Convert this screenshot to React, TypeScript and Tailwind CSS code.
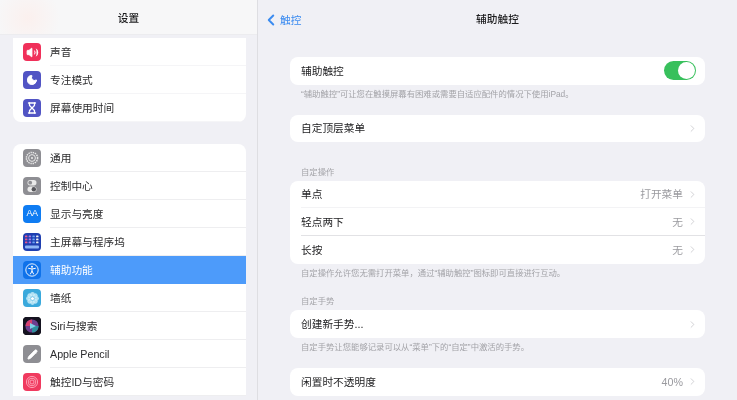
import React from "react";
import { Volume2, Moon, Hourglass, ChevronLeft, ChevronRight, Pencil } from "lucide-react";

const FONT = "font-['Liberation_Sans','Noto_Sans_CJK_SC',sans-serif]";

function IconBox({ className, children }: { className: string; children?: React.ReactNode }) {
  return (
    <div className={`w-[18px] h-[18px] rounded-[4px] flex items-center justify-center shrink-0 overflow-hidden ${className}`}>
      {children}
    </div>
  );
}

function GearIcon() {
  return (
    <svg width="14" height="14" viewBox="0 0 14 14">
      <circle cx="7" cy="7" r="5.6" fill="none" stroke="#e8e8e8" strokeWidth="1.5" strokeDasharray="1.4 0.8" />
      <circle cx="7" cy="7" r="3.4" fill="none" stroke="#e8e8e8" strokeWidth="1" />
      <circle cx="7" cy="7" r="1.1" fill="#e8e8e8" />
    </svg>
  );
}

function ControlIcon() {
  return (
    <svg width="14" height="14" viewBox="0 0 14 14">
      <rect x="2.5" y="1" width="9" height="5.4" rx="2.7" fill="#e9e9e9" />
      <circle cx="5.2" cy="3.7" r="1.9" fill="#8e8e93" />
      <rect x="2.5" y="7.6" width="9" height="5.4" rx="2.7" fill="#e9e9e9" />
      <circle cx="8.8" cy="10.3" r="2.2" fill="#55555a" />
    </svg>
  );
}

function HomeIcon() {
  const colors = ["#e8578d", "#a879e6", "#6da6f5", "#f0f0f0"];
  return (
    <svg width="16" height="16" viewBox="0 0 16 16">
      {[1.5, 4.5, 7.5].map((y) =>
        [1, 4.7, 8.4, 12.1].map((x, i) => <rect key={`${x}-${y}`} x={x} y={y} width="2.4" height="1.8" rx="0.4" fill={colors[i]} />)
      )}
      <rect x="1" y="11.5" width="14" height="3" rx="1" fill="#8fb6f5" />
    </svg>
  );
}

function AccessIcon() {
  return (
    <svg width="14" height="14" viewBox="0 0 14 14" fill="none" stroke="#fff">
      <circle cx="7" cy="7" r="6.2" strokeWidth="0.9" />
      <circle cx="7" cy="3.7" r="1" fill="#fff" stroke="none" />
      <path d="M3.6 5.3 L7 6 L10.4 5.3 M7 6 V8.2 M7 8.2 L5.4 11 M7 8.2 L8.6 11" strokeWidth="1" strokeLinecap="round" />
    </svg>
  );
}

function FlowerIcon() {
  return (
    <svg width="15" height="15" viewBox="0 0 15 15" fill="#d8f3fb" fillOpacity="0.75">
      {[0, 45, 90, 135, 180, 225, 270, 315].map((a) => (
        <circle key={a} cx="7.5" cy="3.4" r="2.3" transform={`rotate(${a} 7.5 7.5)`} />
      ))}
      <circle cx="7.5" cy="7.5" r="1.6" fill="#fff" fillOpacity="1" />
    </svg>
  );
}

function SiriIcon() {
  return (
    <svg width="18" height="18" viewBox="0 0 18 18">
      <rect width="18" height="18" fill="#151320" />
      <circle cx="9" cy="9" r="6.6" fill="#6d3f8f" />
      <path d="M2.6 9 A6.5 6.5 0 0 1 9 2.5 L9 9 Z" fill="#d6406f" />
      <path d="M9 15.6 A6.6 6.6 0 0 0 15.6 9 L9 9 Z" fill="#2f8f9e" />
      <path d="M7 6 L13 9 L7 12 Z" fill="#7fd0e8" />
    </svg>
  );
}

function FingerprintIcon() {
  return (
    <svg width="14" height="14" viewBox="0 0 14 14" fill="none" stroke="#ffa9bb" strokeWidth="0.9">
      <circle cx="7" cy="7" r="5.6" />
      <circle cx="7" cy="7" r="3.8" />
      <circle cx="7" cy="7" r="2" />
    </svg>
  );
}

type SideItem = { label: string; icon: React.ReactNode; active?: boolean };

const topItems: SideItem[] = [
  { label: "声音", icon: <IconBox className="bg-[#f0305a]"><Volume2 size={13} color="#fff" fill="#fff" strokeWidth={1.6} /></IconBox> },
  { label: "专注模式", icon: <IconBox className="bg-[#5154c4]"><Moon size={12} color="#fff" fill="#fff" /></IconBox> },
  { label: "屏幕使用时间", icon: <IconBox className="bg-[#5154c4]"><Hourglass size={12} color="#fff" strokeWidth={2.6} /></IconBox> },
];

const mainItems: SideItem[] = [
  { label: "通用", icon: <IconBox className="bg-[#8e8e93]"><GearIcon /></IconBox> },
  { label: "控制中心", icon: <IconBox className="bg-[#8e8e93]"><ControlIcon /></IconBox> },
  { label: "显示与亮度", icon: <IconBox className="bg-[#0f7cf2] text-white text-[9px] tracking-[-0.5px]">AA</IconBox> },
  { label: "主屏幕与程序坞", icon: <IconBox className="bg-[#1f3fb0]"><HomeIcon /></IconBox> },
  { label: "辅助功能", icon: <IconBox className="bg-[#0f72ea]"><AccessIcon /></IconBox>, active: true },
  { label: "墙纸", icon: <IconBox className="bg-[#3aa9dc]"><FlowerIcon /></IconBox> },
  { label: "Siri与搜索", icon: <IconBox className="bg-black"><SiriIcon /></IconBox> },
  { label: "Apple Pencil", icon: <IconBox className="bg-[#8e8e93]"><Pencil size={11} color="#fff" fill="#fff" /></IconBox> },
  { label: "触控ID与密码", icon: <IconBox className="bg-[#f03a5f]"><FingerprintIcon /></IconBox> },
];

function SideRow({ item, faint }: { item: SideItem; faint?: boolean }) {
  const line = faint ? "border-b border-[#f5f5f7]" : "border-b border-[#eeeef0]";
  return (
    <div className={`h-[28px] flex items-center pl-[10px] gap-[9px] ${item.active ? "bg-[#4d9bfa] text-white" : "text-[#2c2c2e]"}`}>
      {item.icon}
      <div className={`flex-1 h-full flex items-center pt-[1px] ${item.active ? "" : line}`}>{item.label}</div>
    </div>
  );
}

function Chevron() {
  return <ChevronRight size={11} strokeWidth={1.8} className="text-[#c8c8cc] shrink-0 ml-[4px] -mr-[2px]" />;
}

function Row({ label, value, chevron = true, line, children }: {
  label: string;
  value?: string;
  chevron?: boolean;
  line?: string;
  children?: React.ReactNode;
}) {
  return (
    <div className={`h-[27.67px] flex items-center pl-[11px] ${line ? "" : "pr-[9px]"}`}>
      <div className={`flex-1 h-full flex items-center text-[#1c1c1e] ${line ? `border-b pr-[9px] ${line}` : ""}`}>
        <span className="flex-1">{label}</span>
        {value && <span className="text-[#9a9a9f]">{value}</span>}
        {chevron && <Chevron />}
        {children}
      </div>
    </div>
  );
}

function Card({ children, className = "" }: { children: React.ReactNode; className?: string }) {
  return <div className={`bg-white rounded-[8px] overflow-hidden ${className}`}>{children}</div>;
}

function Caption({ children, className = "" }: { children: React.ReactNode; className?: string }) {
  return <div className={`pl-[11px] text-[8.35px] leading-[10px] text-[#a3a3a8] ${className}`}>{children}</div>;
}

export default function App() {
  return (
    <div className={`${FONT} w-[737px] h-[400px] flex overflow-hidden text-[10.7px] bg-[#f0f0f5] blur-[0.4px]`}>
      <div className="w-[258px] shrink-0 flex flex-col border-r border-[#dedee2] overflow-hidden">
        <div className="h-[35px] shrink-0 flex items-center justify-center pt-[3px] bg-[#f7f7f8] bg-[radial-gradient(circle_at_28px_18px,#fbf0ee_0,#f7f7f8_32px)] font-medium text-[#1c1c1e] border-b border-[#ececef]">
          设置
        </div>
        <div className="mt-[3px] ml-[13px] mr-[11px]">
          <Card className="rounded-t-none">
            {topItems.map((item) => (
              <SideRow key={item.label} item={item} faint />
            ))}
          </Card>
          <Card className="mt-[22px] rounded-b-none">
            {mainItems.map((item) => (
              <SideRow key={item.label} item={item} />
            ))}
          </Card>
        </div>
      </div>

      <div className="flex-1 flex flex-col min-w-0">
        <div className="h-[38px] shrink-0 relative flex items-center justify-center font-medium text-[#1c1c1e]">
          <div className="absolute left-[5px] top-[11px] flex items-center text-[#3b8bf0] font-normal">
            <ChevronLeft size={18} strokeWidth={2.6} className="-ml-[1px]" />
            <span>触控</span>
          </div>
          辅助触控
        </div>
        <div className="px-[32px] pt-[19px]">
          <Card>
            <Row label="辅助触控" chevron={false}>
              <div className="w-[32px] h-[19px] rounded-full bg-[#38c05c] flex items-center justify-end pr-[1px]">
                <div className="w-[17px] h-[17px] rounded-full bg-white" />
              </div>
            </Row>
          </Card>
          <Caption className="mt-[4px]">“辅助触控”可让您在触摸屏幕有困难或需要自适应配件的情况下使用iPad。</Caption>
          <Card className="mt-[16px]">
            <Row label="自定顶层菜单" />
          </Card>
          <Caption className="mt-[24.4px]">自定操作</Caption>
          <Card className="mt-[4px]">
            <Row label="单点" value="打开菜单" line="border-[#f3f3f5]" />
            <Row label="轻点两下" value="无" line="border-[#e2e2e5]" />
            <Row label="长按" value="无" />
          </Card>
          <Caption className="mt-[4.3px]">自定操作允许您无需打开菜单，通过“辅助触控”图标即可直接进行互动。</Caption>
          <Caption className="mt-[18.4px]">自定手势</Caption>
          <Card className="mt-[4px]">
            <Row label="创建新手势..." />
          </Card>
          <Caption className="mt-[4.3px]">自定手势让您能够记录可以从“菜单”下的“自定”中激活的手势。</Caption>
          <Card className="mt-[15.6px]">
            <Row label="闲置时不透明度" value="40%" />
          </Card>
        </div>
      </div>
    </div>
  );
}
